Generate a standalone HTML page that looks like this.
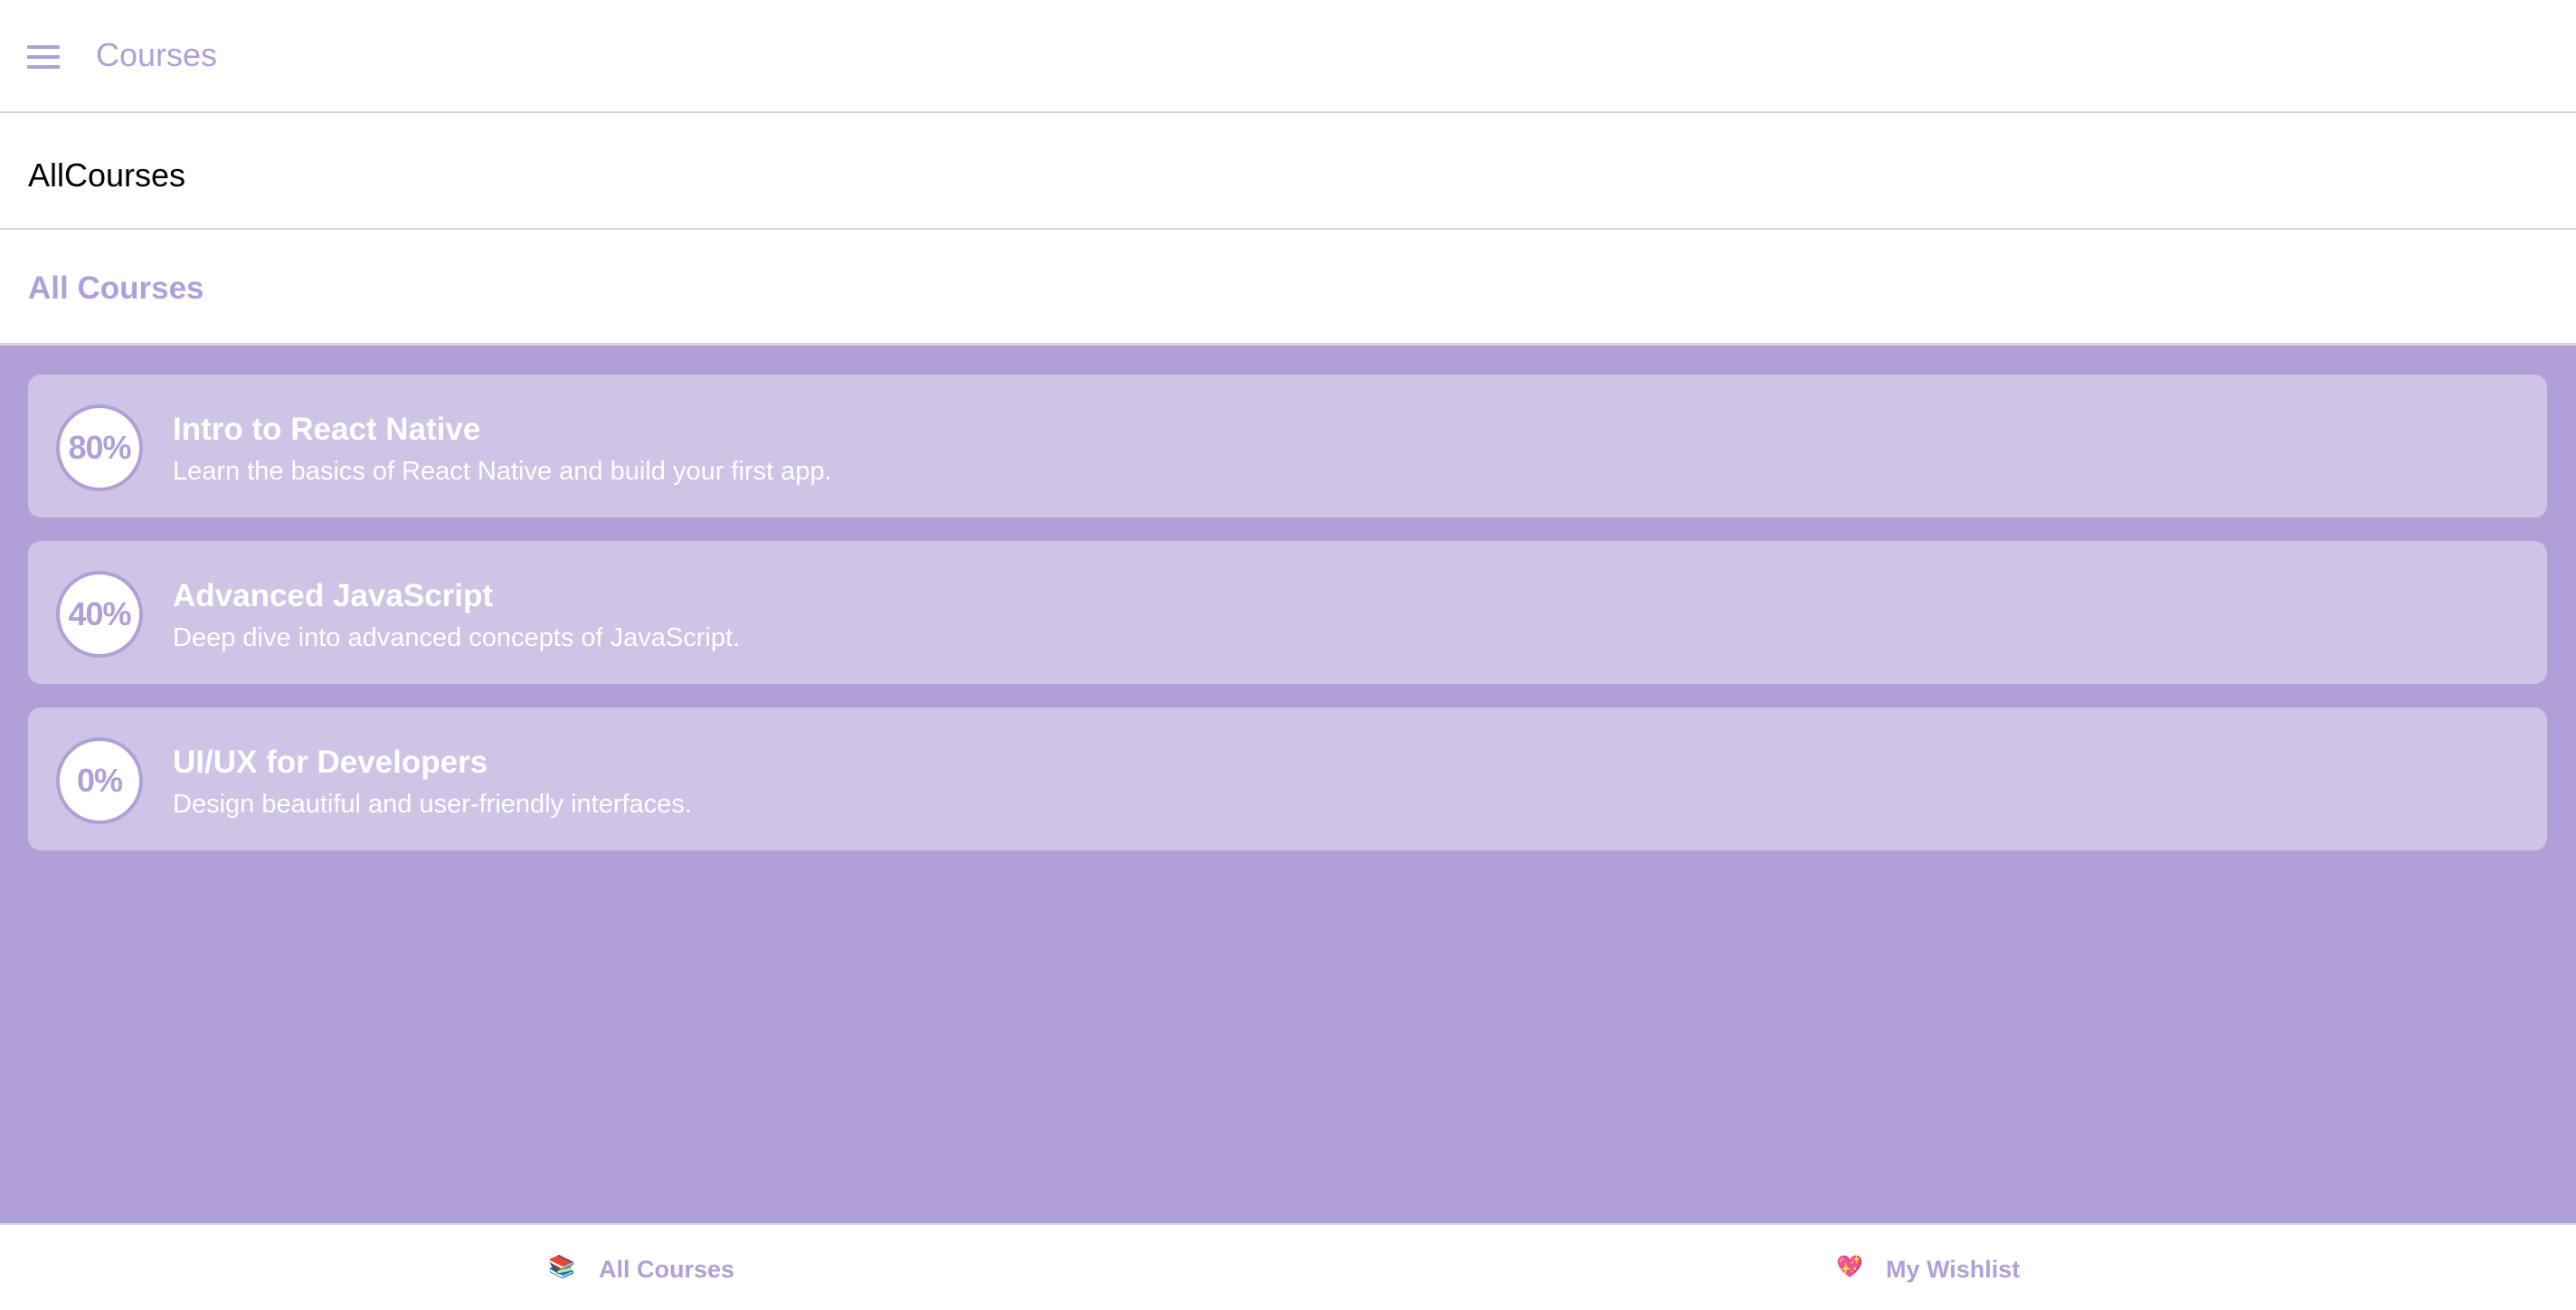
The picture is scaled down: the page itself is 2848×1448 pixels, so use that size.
<!DOCTYPE html>
<html><head><meta charset="utf-8"><style>
*{margin:0;padding:0;box-sizing:border-box}
body{width:2848px;height:1448px;overflow:hidden;background:#fff;font-family:"Liberation Sans",Helvetica,Arial,sans-serif;position:relative}
.hdr{position:absolute;left:0;top:0;width:2848px;height:125px;border-bottom:2px solid #d8d8d8}
.ham{position:absolute;left:30px;top:50px;width:36px}
.ham div{height:4px;background:#b19fd9;margin-bottom:7px;border-radius:1px}
.hdr .t{position:absolute;left:106px;top:40px;font-size:36px;color:#b19fd9;font-weight:500}
.bar2{position:absolute;left:0;top:125px;width:2848px;height:129px;border-bottom:2px solid #d8d8d8}
.bar2 span{position:absolute;left:31px;top:48px;font-size:36px;color:#000}
.bar3{position:absolute;left:0;top:254px;width:2848px;height:128px;border-bottom:3px solid #d8d8d8}
.bar3 span{position:absolute;left:31px;top:45px;font-size:35px;color:#b19fd9;font-weight:bold}
.main{position:absolute;left:0;top:382px;width:2848px;height:970px;background:#b19fd8}
.card{position:absolute;left:31px;width:2785px;height:158px;background:#cfc3e6;border-radius:14px}
.circ{position:absolute;left:31px;top:33px;width:96px;height:96px;border-radius:50%;background:#fff;border:4px solid #b19fd8;color:#b19fd8;font-weight:bold;font-size:36px;letter-spacing:-1px;display:flex;align-items:center;justify-content:center}
.ti{position:absolute;left:160px;top:41px;font-size:35px;font-weight:bold;color:#fff}
.de{position:absolute;left:160px;top:91px;font-size:29px;color:#fff}
.tabs{position:absolute;left:0;top:1352px;width:2848px;height:96px;background:#fff;border-top:2px solid #d8d8d8}
.tab{position:absolute;top:34px;font-size:27px;font-weight:bold;color:#b19fd9}
.ic{position:absolute;top:32px;font-size:24px;font-family:"Noto Color Emoji","DejaVu Sans",sans-serif}
</style></head><body>
<div class="hdr"><div class="ham"><div></div><div></div><div></div></div><span class="t">Courses</span></div>
<div class="bar2"><span>AllCourses</span></div>
<div class="bar3"><span>All Courses</span></div>
<div class="main">
<div class="card" style="top:32px"><div class="circ">80%</div><div class="ti">Intro to React Native</div><div class="de">Learn the basics of React Native and build your first app.</div></div>
<div class="card" style="top:216px"><div class="circ">40%</div><div class="ti">Advanced JavaScript</div><div class="de">Deep dive into advanced concepts of JavaScript.</div></div>
<div class="card" style="top:400px"><div class="circ">0%</div><div class="ti">UI/UX for Developers</div><div class="de">Design beautiful and user-friendly interfaces.</div></div>
</div>
<div class="tabs">
<span class="ic" style="left:606px">📚</span><span class="tab" style="left:662px">All Courses</span>
<span class="ic" style="left:2030px">💖</span><span class="tab" style="left:2085px">My Wishlist</span>
</div>
</body></html>
